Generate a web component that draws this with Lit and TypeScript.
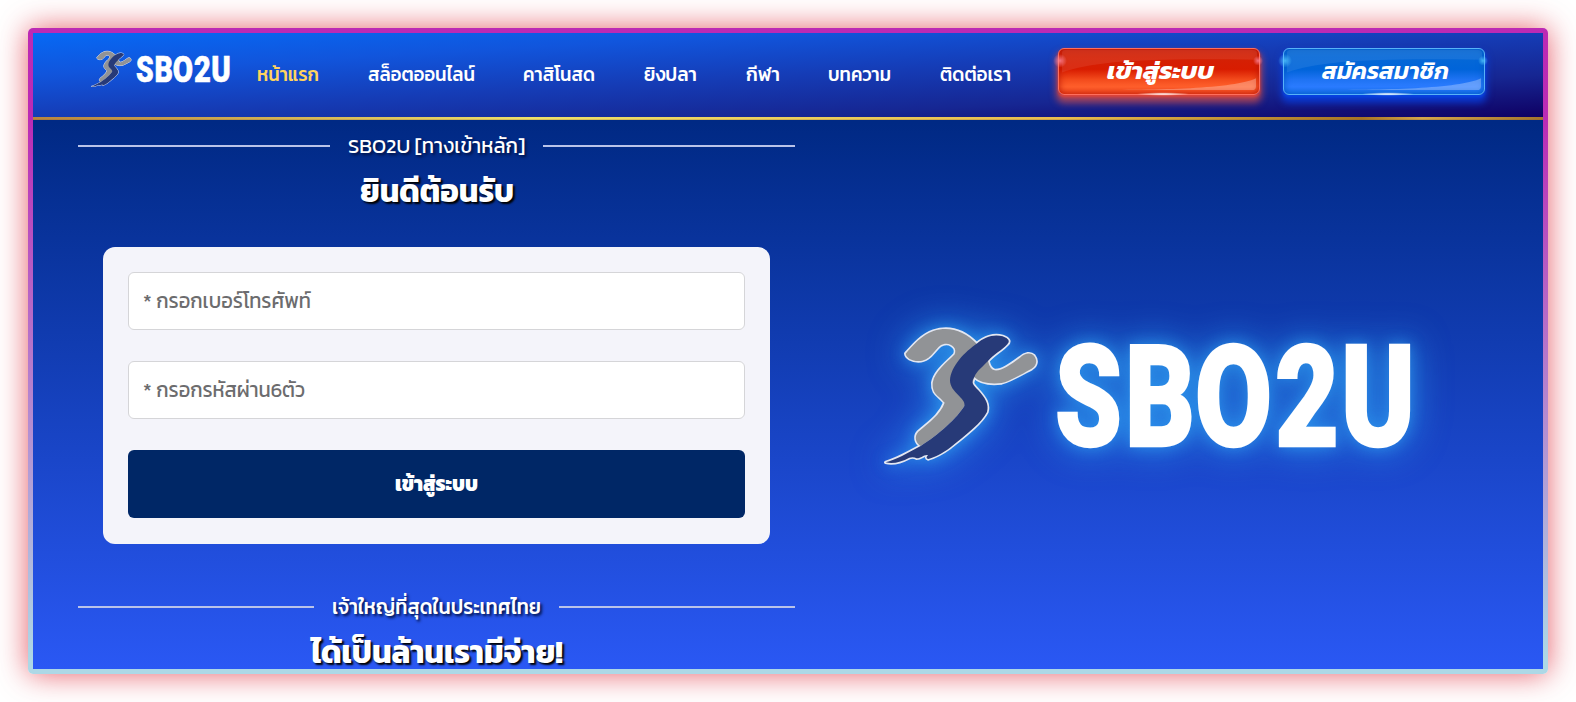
import { LitElement, html, css, svg } from "lit";
import { customElement, property } from "lit/decorators.js";

/** One line of text set to an exact width, sitting in normal flow. */
@customElement("fit-text")
export class FitText extends LitElement {
  @property() text = "";
  @property({ type: Number }) width = 100;
  @property({ type: Number }) size = 20;
  static styles = css`
    :host { display: inline-block; flex: none; line-height: 0; }
    svg { display: block; overflow: visible; }
    text { fill: currentColor; }
  `;
  render() {
    return html`<svg width=${this.width} height=${this.size}>
      <text x="0" y=${this.size * 0.8} font-size=${this.size} textLength=${this.width} lengthAdjust="spacingAndGlyphs">${this.text}</text>
    </svg>`;
  }
}

const body = "M320,98 C342,78 372,68 398,76 Q426,86 412,100 C395,118 372,130 354,150 C335,170 320,180 313,198 C301,215 310,222 325,238 C345,260 358,280 351,303 C335,335 290,370 240,410 C215,428 195,438 175,444 Q165,442 174,432 C160,430 155,442 140,442 Q130,436 118,440 C95,452 70,460 47,454 C75,448 115,425 152,405 C205,372 262,320 283,285 C290,262 240,245 240,208 C242,165 285,122 320,98Z";
const limbs = "M107,128 C130,102 155,72 190,60 C240,44 285,62 320,98 L354,150 Q360,176 374,178 C395,180 420,162 450,140 C465,126 482,124 492,134 C503,148 500,164 485,173 C450,192 420,210 395,216 C360,220 330,215 313,198 L283,285 C262,320 205,372 152,405 C138,395 131,378 145,362 C180,332 210,312 224,275 C205,252 186,250 188,215 C195,180 230,155 254,130 C264,108 235,88 210,104 C190,120 180,150 145,150 C125,150 108,140 107,128Z";

@customElement("brand-logo")
export class BrandLogo extends LitElement {
  @property({ type: Number }) width = 528;
  static styles = css`
    :host { display: block; flex: none; }
    svg { display: block; overflow: visible; }
    .word { font: 900 141px Roboto, sans-serif; fill: #fff; stroke: #fff; stroke-width: 2.5; }
    .outline { fill: #fff; stroke: #e3e7f2; stroke-width: 10; stroke-linejoin: round; }
    .limbs { fill: #919396; }
    .body { fill: #273a78; }
  `;
  render() {
    const letters: [string, number, number][] = [["S", 171, 67], ["B", 241, 70], ["O", 311, 77], ["2", 391, 64], ["U", 457, 74]];
    return html`<svg width=${this.width} height=${(this.width * 136) / 528} viewBox="0 0 528 136">
      <g transform="translate(-14 -17) scale(.33333)">
        <path class="outline" d=${limbs}></path><path class="outline" d=${body}></path>
        <path class="limbs" d=${limbs}></path><path class="body" d=${body}></path>
      </g>
      ${letters.map(([c, x, w]) => svg`<text class="word" x=${x} y="118" textLength=${w} lengthAdjust="spacingAndGlyphs">${c}</text>`)}
    </svg>`;
  }
}

@customElement("glow-button")
export class GlowButton extends LitElement {
  @property({ reflect: true }) tone = "red";
  @property() text = "";
  @property({ type: Number }) width = 100;
  static styles = css`
    :host { display: block; flex: none; width: 202px; height: 47px; }
    .face {
      position: relative; box-sizing: border-box; width: 100%; height: 100%;
      display: flex; justify-content: center; padding: 11px 0 0 2px;
      border: 1.5px solid #ff6e5c; border-radius: 6px; color: #fff;
      font-weight: 700; font-style: italic;
      background: linear-gradient(#d12409 0%, #d81c00 45%, #f34b1c 68%, #ff602c 84%, #f34b20 100%);
      box-shadow: 0 6px 7px 2px rgba(222, 78, 66, .7), 0 2px 3px 0 #e92d20, inset 0 0 7px #b91707;
    }
    :host([tone="blue"]) .face {
      border-color: #58b2f8;
      background: linear-gradient(#096bd5 0%, #0064d9 45%, #1f73f3 68%, #2b7cff 84%, #1772ee 100%);
      box-shadow: 0 6px 7px 2px rgba(8, 62, 225, .8), 0 2px 3px 0 #0757ee, inset 0 0 7px #0258c5;
    }
    :host([tone="blue"]) fit-text { font-weight: 600; }
    .shine { position: absolute; inset: 0; width: 100%; height: 100%; overflow: visible; }
    fit-text { position: relative; }
  `;
  render() {
    const spark = this.tone === "red" ? "#ff8aa0" : "#55c8ff";
    return html`<div class="face">
      <svg class="shine" viewBox="0 0 200 46" preserveAspectRatio="none">
        <defs>
          <radialGradient id="s"><stop offset="0" stop-color=${spark} stop-opacity=".8"></stop><stop offset="1" stop-color=${spark} stop-opacity="0"></stop></radialGradient>
          <radialGradient id="w"><stop offset="0" stop-color="#fff"></stop><stop offset="1" stop-color="#fff" stop-opacity="0"></stop></radialGradient>
        </defs>
        <path d="M3,24 C35,12 90,9 198,11 V4 Q198,1 194,1 H6 Q3,1 3,4Z" fill="#fff" opacity=".08"></path>
        <path d="M197,30 C175,41 100,42 30,42 H193 Q197,42 197,38Z" fill="#fff" opacity=".28"></path>
        <ellipse cx="1" cy="12" rx="7" ry="7" fill="url(#s)"></ellipse>
        <ellipse cx="199" cy="12" rx="5" ry="5" fill="url(#s)"></ellipse>
        <ellipse cx="104" cy="46" rx="27" ry="1.800" fill="url(#w)"></ellipse>
      </svg>
      <fit-text .text=${this.text} .width=${this.width} .size=${24}></fit-text>
    </div>`;
  }
}

@customElement("app-root")
export class AppRoot extends LitElement {
  static styles = css`
    :host {
      display: block; box-sizing: border-box; height: 702px; padding: 28px; overflow: hidden;
      background: #fff; color: #fff;
      font-family: Kanit, Prompt, "Noto Sans Thai", "Noto Sans", "Open Sans", sans-serif;
    }
    .frame {
      box-sizing: border-box; height: 646px; padding: 5px; border-radius: 5px;
      background: linear-gradient(#bc2ab4, #bb2bb5 14%, #add8e6 98%);
      box-shadow: 0 0 30px rgba(222, 40, 55, .75);
    }
    .page {
      height: 636px; overflow: hidden; display: flex; flex-direction: column;
      background: linear-gradient(#002984 14%, #2a58f4 100%);
    }
    header {
      box-sizing: border-box; height: 84px; flex: none; display: flex; align-items: flex-start; padding-left: 58px;
      background: linear-gradient(to bottom right, #0669f5 0%, #1155dc 25%, #153cb6 50%, #162692 75%, #0f0063 100%);
    }
    header brand-logo { margin-top: 18px; }
    nav { display: flex; margin: 32px 0 0 27px; width: 754px; justify-content: space-between; font-weight: 500; }
    .active { color: #ffd45e; }
    .actions { display: flex; gap: 23px; margin: 15px 0 0 47px; }
    .gold {
      height: 3px; flex: none;
      background: linear-gradient(transparent 50%, rgba(130, 90, 60, .35)), linear-gradient(90deg, #b9853f, #efe06a 33%, #e9bd4f 68%, #a87524 88%, #d6a64b 92%, #a4752c);
    }
    main { display: flex; padding-left: 45px; }
    .left { width: 717px; flex: none; display: flex; flex-direction: column; align-items: center; }
    .rule { display: flex; align-items: center; gap: 18px; width: 100%; text-shadow: 2px 2px 3px #001040; font-weight: 500; }
    .rule::before, .rule::after { content: ""; height: 2px; flex: 1; background: #b9c3e9; }
    .first { margin-top: 15px; height: 22px; font-weight: 400; }
    .title { font-weight: 700; text-shadow: 2px 2px 2px #000; }
    .welcome { margin-top: 19px; }
    .card {
      box-sizing: border-box; width: 667px; height: 297px; margin-top: 39px; padding: 25px; border-radius: 12px;
      background: #f4f4fa; display: flex; flex-direction: column; gap: 31px;
    }
    .field {
      box-sizing: border-box; height: 58px; flex: none; padding: 18px 14px; border: 1.5px solid #d5d5d8; border-radius: 6px;
      background: #fff; color: #6c6c6e;
    }
    .submit {
      height: 68px; flex: none; display: flex; justify-content: center; box-sizing: border-box; padding-top: 24px;
      border-radius: 6px; background: #002766; font-weight: 800;
    }
    .second { margin-top: 52px; height: 22px; }
    .offer { margin-top: 19px; }
    .right { flex: 1; display: flex; padding: 208px 0 0 89px; }
    .right brand-logo { filter: drop-shadow(0 0 7px rgba(48, 160, 242, .6)) drop-shadow(0 0 17px rgba(48, 165, 245, .75)); }
  `;
  private links: [string, number][] = [
    ["หน้าแรก", 62], ["สล็อตออนไลน์", 107], ["คาสิโนสด", 72], ["ยิงปลา", 53], ["กีฬา", 34], ["บทความ", 63], ["ติดต่อเรา", 71],
  ];
  private fit(text: string, width: number, size: number, cls = "") {
    return html`<fit-text class=${cls} .text=${text} .width=${width} .size=${size}></fit-text>`;
  }
  render() {
    return html`<div class="frame"><div class="page">
      <header>
        <brand-logo .width=${139}></brand-logo>
        <nav>${this.links.map(([t, w], i) => this.fit(t, w, 20, i === 0 ? "active" : ""))}</nav>
        <div class="actions">
          <glow-button tone="red" .text=${"เข้าสู่ระบบ"} .width=${107}></glow-button>
          <glow-button tone="blue" .text=${"สมัครสมาชิก"} .width=${127}></glow-button>
        </div>
      </header>
      <div class="gold"></div>
      <main>
        <section class="left">
          <div class="rule first">${this.fit("SBO2U [ทางเข้าหลัก]", 177, 21)}</div>
          ${this.fit("ยินดีต้อนรับ", 154, 32, "title welcome")}
          <div class="card">
            <div class="field">${this.fit("* กรอกเบอร์โทรศัพท์", 168, 21)}</div>
            <div class="field">${this.fit("* กรอกรหัสผ่าน6ตัว", 162, 21)}</div>
            <div class="submit">${this.fit("เข้าสู่ระบบ", 83, 21)}</div>
          </div>
          <div class="rule second">${this.fit("เจ้าใหญ่ที่สุดในประเทศไทย", 209, 21)}</div>
          ${this.fit("ได้เป็นล้านเรามีจ่าย!", 252, 32, "title offer")}
        </section>
        <section class="right"><brand-logo></brand-logo></section>
      </main>
    </div></div>`;
  }
}
